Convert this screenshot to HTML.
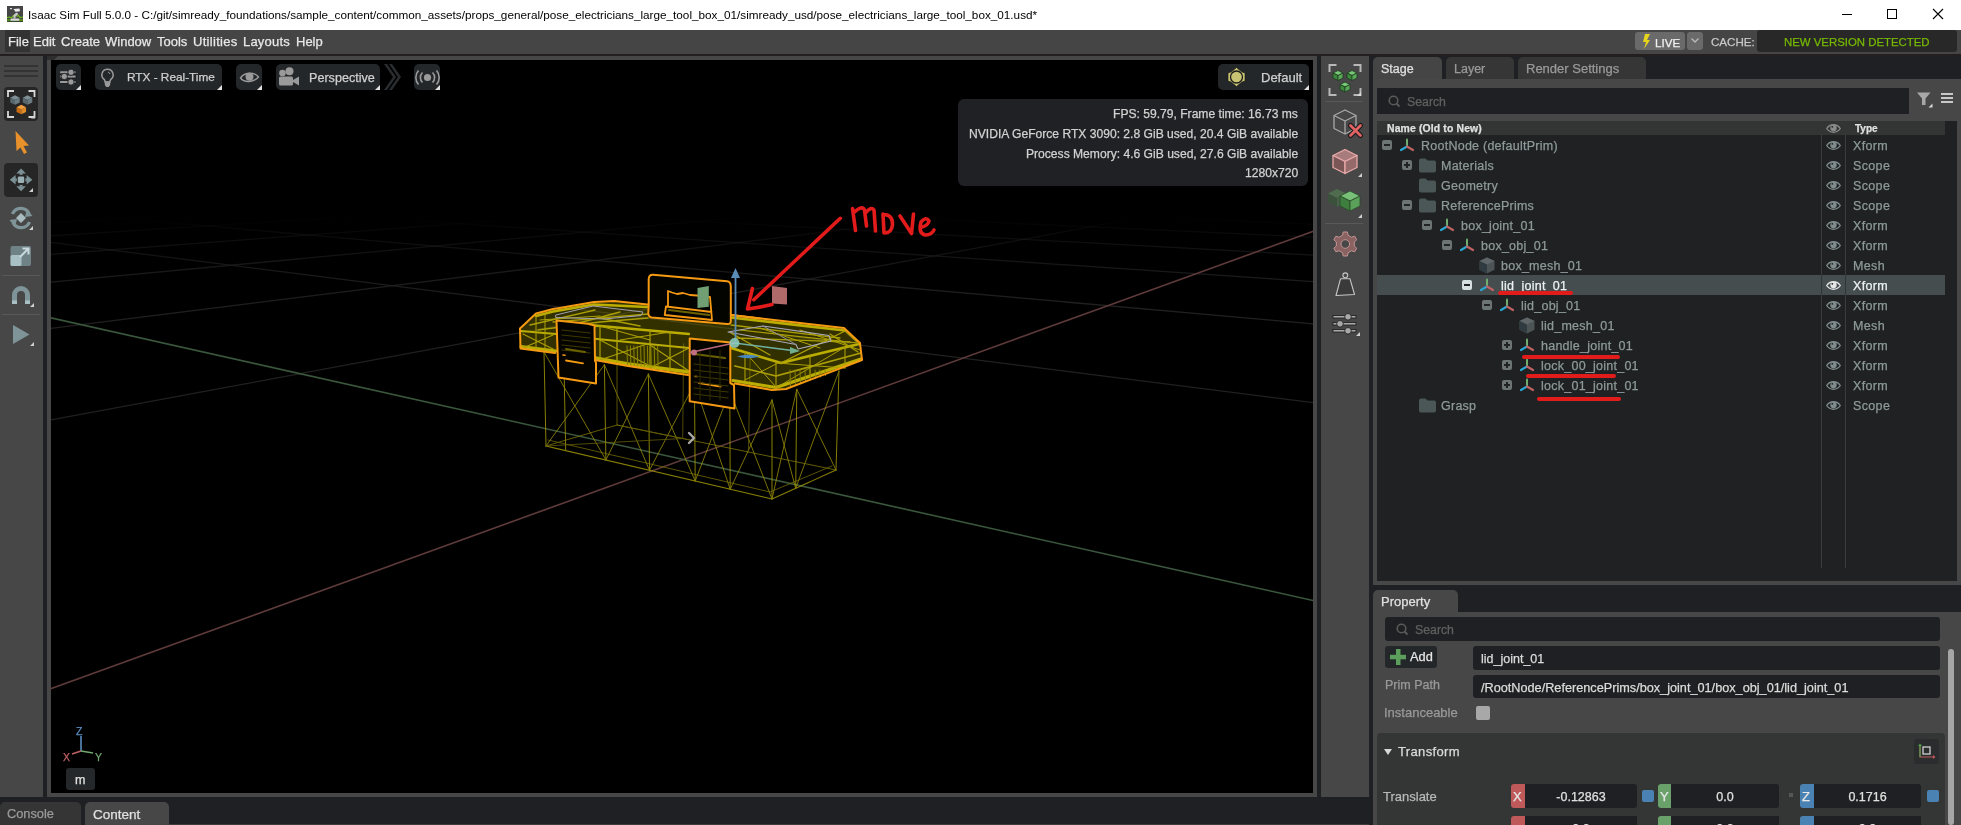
<!DOCTYPE html>
<html><head><meta charset="utf-8">
<style>
*{margin:0;padding:0;box-sizing:border-box}
html,body{width:1961px;height:825px;overflow:hidden;background:#1f2023;font-family:"Liberation Sans",sans-serif}
.a{position:absolute}
.t{position:absolute;white-space:nowrap;line-height:1;will-change:transform;-webkit-text-stroke:0.25px currentColor}
svg{overflow:visible}
</style></head><body>
<div class="a" style="left:0px;top:0px;width:1961px;height:30px;background:#ffffff;"></div>
<svg class="a" style="left:7px;top:6px;" width="16" height="16" viewBox="0 0 16 16"><rect x="0" y="0" width="16" height="16" fill="#454545"/><rect x="0" y="13" width="16" height="3" fill="#3a4a30"/><path d="M0 11.5L2.5 11L4.5 11.8L6.5 9.5L8 10.5M9.5 10.5L11.5 9.5L13 11.5L16 11" stroke="#6cc018" stroke-width="1.2" fill="none"/><path d="M0 14H16" stroke="#6cc018" stroke-width="1"/><rect x="3.5" y="12.5" width="9" height="2.2" rx="1" fill="#d8d8d8"/><path d="M6.5 12.5V9L9.5 6.5L11.5 8L8.5 10.5V12.5Z" fill="#c8c8c8"/><path d="M6.5 3L12.5 2.5L13 5.2L8.5 5.8Z" fill="#eeeeee"/><rect x="3" y="2" width="2" height="1.2" fill="#e0e0e0"/></svg>
<div class="t" style="left:28px;top:9.38px;font-size:11.74px;color:#000;font-weight:400;-webkit-text-stroke:0">Isaac Sim Full 5.0.0 - C:/git/simready_foundations/sample_content/common_assets/props_general/pose_electricians_large_tool_box_01/simready_usd/pose_electricians_large_tool_box_01.usd*</div>
<div class="a" style="left:1842px;top:14px;width:10px;height:1px;background:#000;"></div>
<div class="a" style="left:1887px;top:9px;width:10px;height:10px;border:1px solid #000"></div>
<svg class="a" style="left:1933px;top:9px;" width="10" height="10" viewBox="0 0 10 10"><path d="M0 0L10 10M10 0L0 10" stroke="#000" stroke-width="1.1"/></svg>
<div class="a" style="left:0px;top:30px;width:1961px;height:24px;background:#454545;"></div>
<div class="a" style="left:5px;top:30px;width:25px;height:22px;background:#333333;"></div>
<div class="t" style="left:7.5px;top:35.44px;font-size:13px;color:#e8e8e8;font-weight:400;letter-spacing:0px">File</div>
<div class="t" style="left:32.5px;top:35.44px;font-size:13px;color:#e8e8e8;font-weight:400;letter-spacing:0px">Edit</div>
<div class="t" style="left:60.6px;top:35.44px;font-size:13px;color:#e8e8e8;font-weight:400;letter-spacing:0px">Create</div>
<div class="t" style="left:104.9px;top:35.44px;font-size:13px;color:#e8e8e8;font-weight:400;letter-spacing:0px">Window</div>
<div class="t" style="left:157px;top:35.44px;font-size:13px;color:#e8e8e8;font-weight:400;letter-spacing:0px">Tools</div>
<div class="t" style="left:193px;top:35.44px;font-size:13px;color:#e8e8e8;font-weight:400;letter-spacing:0.3px">Utilities</div>
<div class="t" style="left:243.4px;top:35.44px;font-size:13px;color:#e8e8e8;font-weight:400;letter-spacing:0.2px">Layouts</div>
<div class="t" style="left:295.5px;top:35.44px;font-size:13px;color:#e8e8e8;font-weight:400;letter-spacing:0px">Help</div>
<div class="a" style="left:1635px;top:32px;width:50px;height:18px;background:#6a6a6a;border-radius:3px"></div>
<svg class="a" style="left:1642px;top:34px;" width="9" height="15" viewBox="0 0 9 15"><path d="M3 0h5L5 6h3L2 15l2-7H1z" fill="#e8d41c"/></svg>
<div class="t" style="left:1654.8px;top:36.50px;font-size:11.6px;color:#f0f0f0;font-weight:400;">LIVE</div>
<div class="a" style="left:1687px;top:32px;width:16px;height:18px;background:#6a6a6a;border-radius:3px"></div>
<svg class="a" style="left:1691px;top:38px;" width="8" height="5" viewBox="0 0 8 5"><path d="M0.5 0.5L4 4L7.5 0.5" stroke="#bbb" stroke-width="1.3" fill="none"/></svg>
<div class="t" style="left:1711px;top:36.10px;font-size:11.6px;color:#c8c8c8;font-weight:400;">CACHE:</div>
<div class="a" style="left:1757px;top:30px;width:200px;height:22px;background:#282828;border-radius:3px"></div>
<div class="t" style="left:1784px;top:36.88px;font-size:11.4px;color:#76b900;font-weight:400;">NEW VERSION DETECTED</div>
<div class="a" style="left:0px;top:54px;width:1961px;height:2px;background:#221f1e;"></div>
<div class="a" style="left:0px;top:56px;width:43px;height:741px;background:#474747;"></div>
<div class="a" style="left:4px;top:65px;width:34px;height:2px;background:#333333;"></div>
<div class="a" style="left:4px;top:70px;width:34px;height:2px;background:#333333;"></div>
<div class="a" style="left:4px;top:75px;width:34px;height:2px;background:#333333;"></div>
<div class="a" style="left:4px;top:87px;width:34px;height:34px;background:#262626;border-radius:4px"></div>
<div class="a" style="left:4px;top:163px;width:34px;height:34px;background:#262626;border-radius:4px"></div>
<div class="a" style="left:2px;top:275px;width:38px;height:1px;background:#595959;"></div>
<div class="a" style="left:2px;top:314px;width:38px;height:1px;background:#595959;"></div>
<svg class="a" style="left:0;top:0" width="50" height="400" viewBox="0 0 50 400"><path d="M8 97V91H14M28.5 91H34.5V97M8 111V117H14M28.5 117H34.5V111" stroke="#d8d8d8" stroke-width="1.8" fill="none"/><path d="M15 95.25 L19.75 97.625 L15 100 L10.25 97.625 Z" fill="#7d8e94"/><path d="M10.25 97.625 L15 100 L15 104.75 L10.25 102.375 Z" fill="#56686e"/><path d="M19.75 97.625 L15 100 L15 104.75 L19.75 102.375 Z" fill="#6a7c82"/><path d="M27.5 95.25 L32.25 97.625 L27.5 100 L22.75 97.625 Z" fill="#7d8e94"/><path d="M22.75 97.625 L27.5 100 L27.5 104.75 L22.75 102.375 Z" fill="#56686e"/><path d="M32.25 97.625 L27.5 100 L27.5 104.75 L32.25 102.375 Z" fill="#6a7c82"/><path d="M21.3 104.75 L26.05 107.125 L21.3 109.5 L16.55 107.125 Z" fill="#f0a040"/><path d="M16.55 107.125 L21.3 109.5 L21.3 114.25 L16.55 111.875 Z" fill="#c86a10"/><path d="M26.05 107.125 L21.3 109.5 L21.3 114.25 L26.05 111.875 Z" fill="#e08a28"/><path d="M35 114.5V118.5H31z" fill="#d0d0d0"/><path d="M15.5 131L29 145.5L23.5 146L27 152.5L24 154L20.5 147.5L16.5 151Z" fill="#e8912a"/><g fill="#7b9195"><path d="M21.1 168.5L25.9 173.4H16.3Z"/><rect x="19.6" y="173" width="3" height="1.8"/><path d="M21.1 191.2L25.9 186.3H16.3Z"/><rect x="19.6" y="184.9" width="3" height="1.8"/><path d="M9.8 179.8L15.6 175V184.6Z"/><rect x="15.2" y="178.3" width="1.6" height="3"/><path d="M32.4 179.8L26.6 175V184.6Z"/><rect x="25.4" y="178.3" width="1.6" height="3"/></g><rect x="17.8" y="176.5" width="6.4" height="6.6" rx="1.3" fill="#9ab0b4"/><path d="M33 188V192H29z" fill="#d0d0d0"/><g fill="none" stroke="#7f9498" stroke-width="3.2"><path d="M12.5 214A9 9 0 0 1 29 213.5"/><path d="M29.5 222A9 9 0 0 1 13 222.5"/></g><path d="M27 209L32.5 216L25 217Z" fill="#7f9498"/><path d="M15 227L9.5 220L17 219Z" fill="#7f9498"/><path d="M21 213L26 218L21 223L16 218Z" fill="#a8bcc0"/><path d="M33 226V230H29z" fill="#d0d0d0"/><rect x="10.5" y="246" width="20.5" height="20" rx="2" fill="#6f8286"/><rect x="10.5" y="255" width="11" height="11" rx="1.5" fill="#a8c0c4"/><path d="M20 257L28.5 248.5M22.5 248.5H28.5V254.5" stroke="#c8d8dc" stroke-width="2" fill="none"/><path d="M12 304V295A9 9 0 0 1 30 295V304H25V295A4 4 0 0 0 17 295V304Z" fill="#7f9498"/><rect x="12" y="300.5" width="5" height="3.5" fill="#a8c0c4"/><rect x="25" y="300.5" width="5" height="3.5" fill="#a8c0c4"/><path d="M34 303V307H30z" fill="#d0d0d0"/><path d="M13 325L29.5 334.5L13 344Z" fill="#7f9498"/><path d="M34 342V346H30z" fill="#d0d0d0"/></svg>
<div class="a" style="left:47px;top:56px;width:1270px;height:741px;background:#474747;"></div>
<div class="a" style="left:51px;top:60px;width:1262px;height:733px;background:#000000;"></div>
<svg class="a" style="left:51px;top:60px;overflow:hidden" width="1262" height="733" viewBox="51 60 1262 733"><defs>
<linearGradient id="g0" gradientUnits="userSpaceOnUse" x1="-570.6" y1="535.3" x2="1217.3" y2="203.3"><stop offset="0.0000" stop-color="#202020" stop-opacity="1.000"/><stop offset="0.4747" stop-color="#202020" stop-opacity="1.000"/><stop offset="0.6783" stop-color="#202020" stop-opacity="1.000"/><stop offset="0.7915" stop-color="#202020" stop-opacity="0.799"/><stop offset="0.8635" stop-color="#202020" stop-opacity="0.542"/><stop offset="0.9134" stop-color="#202020" stop-opacity="0.286"/><stop offset="0.9499" stop-color="#202020" stop-opacity="0.030"/><stop offset="0.9779" stop-color="#202020" stop-opacity="0.000"/><stop offset="1.0000" stop-color="#202020" stop-opacity="0.000"/></linearGradient>
<linearGradient id="g1" gradientUnits="userSpaceOnUse" x1="1691.3" y1="450.7" x2="-170.1" y2="214.2"><stop offset="0.0000" stop-color="#202020" stop-opacity="1.000"/><stop offset="0.3819" stop-color="#202020" stop-opacity="1.000"/><stop offset="0.5904" stop-color="#202020" stop-opacity="1.000"/><stop offset="0.7218" stop-color="#202020" stop-opacity="0.857"/><stop offset="0.8122" stop-color="#202020" stop-opacity="0.654"/><stop offset="0.8782" stop-color="#202020" stop-opacity="0.452"/><stop offset="0.9284" stop-color="#202020" stop-opacity="0.249"/><stop offset="0.9680" stop-color="#202020" stop-opacity="0.046"/><stop offset="1.0000" stop-color="#202020" stop-opacity="0.000"/></linearGradient>
<linearGradient id="g2" gradientUnits="userSpaceOnUse" x1="-620.6" y1="412.1" x2="1085.9" y2="199.3"><stop offset="0.0000" stop-color="#202020" stop-opacity="1.000"/><stop offset="0.3993" stop-color="#202020" stop-opacity="1.000"/><stop offset="0.6080" stop-color="#202020" stop-opacity="0.879"/><stop offset="0.7363" stop-color="#202020" stop-opacity="0.622"/><stop offset="0.8231" stop-color="#202020" stop-opacity="0.366"/><stop offset="0.8858" stop-color="#202020" stop-opacity="0.110"/><stop offset="0.9332" stop-color="#202020" stop-opacity="0.000"/><stop offset="0.9702" stop-color="#202020" stop-opacity="0.000"/><stop offset="1.0000" stop-color="#202020" stop-opacity="0.000"/></linearGradient>
<linearGradient id="g3" gradientUnits="userSpaceOnUse" x1="1647.9" y1="353.5" x2="-5.3" y2="207.2"><stop offset="0.0000" stop-color="#202020" stop-opacity="1.000"/><stop offset="0.3192" stop-color="#202020" stop-opacity="1.000"/><stop offset="0.5224" stop-color="#202020" stop-opacity="0.837"/><stop offset="0.6632" stop-color="#202020" stop-opacity="0.634"/><stop offset="0.7664" stop-color="#202020" stop-opacity="0.431"/><stop offset="0.8454" stop-color="#202020" stop-opacity="0.229"/><stop offset="0.9078" stop-color="#202020" stop-opacity="0.026"/><stop offset="0.9583" stop-color="#202020" stop-opacity="0.000"/><stop offset="1.0000" stop-color="#202020" stop-opacity="0.000"/></linearGradient>
<linearGradient id="g4" gradientUnits="userSpaceOnUse" x1="-646.8" y1="347.8" x2="971.2" y2="195.7"><stop offset="0.0000" stop-color="#202020" stop-opacity="1.000"/><stop offset="0.3507" stop-color="#202020" stop-opacity="0.959"/><stop offset="0.5576" stop-color="#202020" stop-opacity="0.702"/><stop offset="0.6940" stop-color="#202020" stop-opacity="0.446"/><stop offset="0.7908" stop-color="#202020" stop-opacity="0.190"/><stop offset="0.8630" stop-color="#202020" stop-opacity="0.000"/><stop offset="0.9190" stop-color="#202020" stop-opacity="0.000"/><stop offset="0.9636" stop-color="#202020" stop-opacity="0.000"/><stop offset="1.0000" stop-color="#202020" stop-opacity="0.000"/></linearGradient>
<linearGradient id="g5" gradientUnits="userSpaceOnUse" x1="1625.3" y1="302.8" x2="130.6" y2="201.4"><stop offset="0.0000" stop-color="#202020" stop-opacity="1.000"/><stop offset="0.2811" stop-color="#202020" stop-opacity="0.816"/><stop offset="0.4771" stop-color="#202020" stop-opacity="0.614"/><stop offset="0.6215" stop-color="#202020" stop-opacity="0.411"/><stop offset="0.7324" stop-color="#202020" stop-opacity="0.209"/><stop offset="0.8202" stop-color="#202020" stop-opacity="0.006"/><stop offset="0.8914" stop-color="#202020" stop-opacity="0.000"/><stop offset="0.9504" stop-color="#202020" stop-opacity="0.000"/><stop offset="1.0000" stop-color="#202020" stop-opacity="0.000"/></linearGradient>
<linearGradient id="g6" gradientUnits="userSpaceOnUse" x1="-662.8" y1="308.3" x2="870.0" y2="192.6"><stop offset="0.0000" stop-color="#202020" stop-opacity="1.000"/><stop offset="0.3167" stop-color="#202020" stop-opacity="0.783"/><stop offset="0.5196" stop-color="#202020" stop-opacity="0.526"/><stop offset="0.6606" stop-color="#202020" stop-opacity="0.270"/><stop offset="0.7644" stop-color="#202020" stop-opacity="0.014"/><stop offset="0.8439" stop-color="#202020" stop-opacity="0.000"/><stop offset="0.9068" stop-color="#202020" stop-opacity="0.000"/><stop offset="0.9578" stop-color="#202020" stop-opacity="0.000"/><stop offset="1.0000" stop-color="#202020" stop-opacity="0.000"/></linearGradient>
<linearGradient id="g7" gradientUnits="userSpaceOnUse" x1="1611.3" y1="271.6" x2="244.8" y2="196.5"><stop offset="0.0000" stop-color="#202020" stop-opacity="0.796"/><stop offset="0.2555" stop-color="#202020" stop-opacity="0.594"/><stop offset="0.4446" stop-color="#202020" stop-opacity="0.391"/><stop offset="0.5904" stop-color="#202020" stop-opacity="0.188"/><stop offset="0.7061" stop-color="#202020" stop-opacity="0.000"/><stop offset="0.8001" stop-color="#202020" stop-opacity="0.000"/><stop offset="0.8781" stop-color="#202020" stop-opacity="0.000"/><stop offset="0.9439" stop-color="#202020" stop-opacity="0.000"/><stop offset="1.0000" stop-color="#202020" stop-opacity="0.000"/></linearGradient>
<linearGradient id="g8" gradientUnits="userSpaceOnUse" x1="-673.7" y1="281.6" x2="780.2" y2="189.8"><stop offset="0.0000" stop-color="#202020" stop-opacity="0.863"/><stop offset="0.2916" stop-color="#202020" stop-opacity="0.606"/><stop offset="0.4899" stop-color="#202020" stop-opacity="0.350"/><stop offset="0.6336" stop-color="#202020" stop-opacity="0.094"/><stop offset="0.7424" stop-color="#202020" stop-opacity="0.000"/><stop offset="0.8277" stop-color="#202020" stop-opacity="0.000"/><stop offset="0.8963" stop-color="#202020" stop-opacity="0.000"/><stop offset="0.9528" stop-color="#202020" stop-opacity="0.000"/><stop offset="1.0000" stop-color="#202020" stop-opacity="0.000"/></linearGradient>
<linearGradient id="g9" gradientUnits="userSpaceOnUse" x1="1601.9" y1="250.5" x2="341.9" y2="192.4"><stop offset="0.0000" stop-color="#202020" stop-opacity="0.573"/><stop offset="0.2371" stop-color="#202020" stop-opacity="0.371"/><stop offset="0.4203" stop-color="#202020" stop-opacity="0.168"/><stop offset="0.5662" stop-color="#202020" stop-opacity="0.000"/><stop offset="0.6851" stop-color="#202020" stop-opacity="0.000"/><stop offset="0.7838" stop-color="#202020" stop-opacity="0.000"/><stop offset="0.8671" stop-color="#202020" stop-opacity="0.000"/><stop offset="0.9384" stop-color="#202020" stop-opacity="0.000"/><stop offset="1.0000" stop-color="#202020" stop-opacity="0.000"/></linearGradient>
<linearGradient id="g10" gradientUnits="userSpaceOnUse" x1="-681.5" y1="262.3" x2="700.0" y2="187.3"><stop offset="0.0000" stop-color="#202020" stop-opacity="0.686"/><stop offset="0.2723" stop-color="#202020" stop-opacity="0.430"/><stop offset="0.4662" stop-color="#202020" stop-opacity="0.174"/><stop offset="0.6112" stop-color="#202020" stop-opacity="0.000"/><stop offset="0.7237" stop-color="#202020" stop-opacity="0.000"/><stop offset="0.8136" stop-color="#202020" stop-opacity="0.000"/><stop offset="0.8871" stop-color="#202020" stop-opacity="0.000"/><stop offset="0.9483" stop-color="#202020" stop-opacity="0.000"/><stop offset="1.0000" stop-color="#202020" stop-opacity="0.000"/></linearGradient>
<linearGradient id="g11" gradientUnits="userSpaceOnUse" x1="1595.1" y1="235.3" x2="425.7" y2="188.9"><stop offset="0.0000" stop-color="#202020" stop-opacity="0.350"/><stop offset="0.2232" stop-color="#202020" stop-opacity="0.148"/><stop offset="0.4014" stop-color="#202020" stop-opacity="0.000"/><stop offset="0.5469" stop-color="#202020" stop-opacity="0.000"/><stop offset="0.6680" stop-color="#202020" stop-opacity="0.000"/><stop offset="0.7703" stop-color="#202020" stop-opacity="0.000"/><stop offset="0.8579" stop-color="#202020" stop-opacity="0.000"/><stop offset="0.9337" stop-color="#202020" stop-opacity="0.000"/><stop offset="1.0000" stop-color="#202020" stop-opacity="0.000"/></linearGradient>
<linearGradient id="g12" gradientUnits="userSpaceOnUse" x1="-687.4" y1="247.7" x2="627.9" y2="185.1"><stop offset="0.0000" stop-color="#202020" stop-opacity="0.510"/><stop offset="0.2570" stop-color="#202020" stop-opacity="0.254"/><stop offset="0.4467" stop-color="#202020" stop-opacity="0.000"/><stop offset="0.5923" stop-color="#202020" stop-opacity="0.000"/><stop offset="0.7078" stop-color="#202020" stop-opacity="0.000"/><stop offset="0.8014" stop-color="#202020" stop-opacity="0.000"/><stop offset="0.8790" stop-color="#202020" stop-opacity="0.000"/><stop offset="0.9443" stop-color="#202020" stop-opacity="0.000"/><stop offset="1.0000" stop-color="#202020" stop-opacity="0.000"/></linearGradient>
<linearGradient id="g13" gradientUnits="userSpaceOnUse" x1="1590.0" y1="223.8" x2="498.6" y2="185.8"><stop offset="0.0000" stop-color="#202020" stop-opacity="0.128"/><stop offset="0.2124" stop-color="#202020" stop-opacity="0.000"/><stop offset="0.3863" stop-color="#202020" stop-opacity="0.000"/><stop offset="0.5312" stop-color="#202020" stop-opacity="0.000"/><stop offset="0.6538" stop-color="#202020" stop-opacity="0.000"/><stop offset="0.7589" stop-color="#202020" stop-opacity="0.000"/><stop offset="0.8500" stop-color="#202020" stop-opacity="0.000"/><stop offset="0.9297" stop-color="#202020" stop-opacity="0.000"/><stop offset="1.0000" stop-color="#202020" stop-opacity="0.000"/></linearGradient>
</defs>
<line x1="-570.6" y1="535.3" x2="1217.3" y2="203.3" stroke="url(#g0)" stroke-width="1.3"/>
<line x1="1691.3" y1="450.7" x2="-170.1" y2="214.2" stroke="url(#g1)" stroke-width="1.3"/>
<line x1="-620.6" y1="412.1" x2="1085.9" y2="199.3" stroke="url(#g2)" stroke-width="1.3"/>
<line x1="1647.9" y1="353.5" x2="-5.3" y2="207.2" stroke="url(#g3)" stroke-width="1.3"/>
<line x1="-646.8" y1="347.8" x2="971.2" y2="195.7" stroke="url(#g4)" stroke-width="1.3"/>
<line x1="1625.3" y1="302.8" x2="130.6" y2="201.4" stroke="url(#g5)" stroke-width="1.3"/>
<line x1="-662.8" y1="308.3" x2="870.0" y2="192.6" stroke="url(#g6)" stroke-width="1.3"/>
<line x1="1611.3" y1="271.6" x2="244.8" y2="196.5" stroke="url(#g7)" stroke-width="1.3"/>
<line x1="-673.7" y1="281.6" x2="780.2" y2="189.8" stroke="url(#g8)" stroke-width="1.3"/>
<line x1="1601.9" y1="250.5" x2="341.9" y2="192.4" stroke="url(#g9)" stroke-width="1.3"/>
<line x1="-681.5" y1="262.3" x2="700.0" y2="187.3" stroke="url(#g10)" stroke-width="1.3"/>
<line x1="1595.1" y1="235.3" x2="425.7" y2="188.9" stroke="url(#g11)" stroke-width="1.3"/>
<line x1="-687.4" y1="247.7" x2="627.9" y2="185.1" stroke="url(#g12)" stroke-width="1.3"/>
<line x1="1590.0" y1="223.8" x2="498.6" y2="185.8" stroke="url(#g13)" stroke-width="1.3"/>
<line x1="40" y1="692.7" x2="1320" y2="228.8" stroke="#5e3a3a" stroke-width="1.6"/>
<line x1="1807.8" y1="711.3" x2="-404.1" y2="216.0" stroke="#3a563c" stroke-width="1.6"/><g opacity="0.8"><path d="M546.0 446.0 L772.0 499.0 L836.0 470.0" stroke="#ab9f06" stroke-width="1.1" fill="none" stroke-linejoin="round" stroke-linecap="round" /><path d="M546.0 446.0 L617.0 425.0 L836.0 470.0" stroke="#7d7406" stroke-width="1.0" fill="none" stroke-linejoin="round" stroke-linecap="round" /><path d="M548.0 440.0 L770.0 492.0 L832.0 466.0" stroke="#7d7406" stroke-width="0.9" fill="none" stroke-linejoin="round" stroke-linecap="round" /><path d="M546.0 446.0 L544.0 352.0" stroke="#ab9f06" stroke-width="1.0" fill="none" stroke-linejoin="round" stroke-linecap="round" /><path d="M565.7 450.6 L563.8 356.2" stroke="#ab9f06" stroke-width="1.0" fill="none" stroke-linejoin="round" stroke-linecap="round" /><path d="M605.9 460.0 L604.4 364.7" stroke="#ab9f06" stroke-width="1.0" fill="none" stroke-linejoin="round" stroke-linecap="round" /><path d="M649.5 470.3 L648.4 374.0" stroke="#ab9f06" stroke-width="1.0" fill="none" stroke-linejoin="round" stroke-linecap="round" /><path d="M695.2 481.0 L694.5 383.7" stroke="#ab9f06" stroke-width="1.0" fill="none" stroke-linejoin="round" stroke-linecap="round" /><path d="M730.2 489.2 L729.8 391.1" stroke="#ab9f06" stroke-width="1.0" fill="none" stroke-linejoin="round" stroke-linecap="round" /><path d="M772.0 499.0 L772.0 400.0" stroke="#ab9f06" stroke-width="1.0" fill="none" stroke-linejoin="round" stroke-linecap="round" /><path d="M546.0 446.0 L604.4 364.7" stroke="#ab9f06" stroke-width="0.9" fill="none" stroke-linejoin="round" stroke-linecap="round" /><path d="M544.0 352.0 L605.9 460.0" stroke="#ab9f06" stroke-width="0.9" fill="none" stroke-linejoin="round" stroke-linecap="round" /><path d="M605.9 460.0 L648.4 374.0" stroke="#ab9f06" stroke-width="0.9" fill="none" stroke-linejoin="round" stroke-linecap="round" /><path d="M604.4 364.7 L649.5 470.3" stroke="#ab9f06" stroke-width="0.9" fill="none" stroke-linejoin="round" stroke-linecap="round" /><path d="M649.5 470.3 L694.5 383.7" stroke="#ab9f06" stroke-width="0.9" fill="none" stroke-linejoin="round" stroke-linecap="round" /><path d="M648.4 374.0 L695.2 481.0" stroke="#ab9f06" stroke-width="0.9" fill="none" stroke-linejoin="round" stroke-linecap="round" /><path d="M695.2 481.0 L729.8 391.1" stroke="#ab9f06" stroke-width="0.9" fill="none" stroke-linejoin="round" stroke-linecap="round" /><path d="M694.5 383.7 L730.2 489.2" stroke="#ab9f06" stroke-width="0.9" fill="none" stroke-linejoin="round" stroke-linecap="round" /><path d="M730.2 489.2 L772.0 400.0" stroke="#ab9f06" stroke-width="0.9" fill="none" stroke-linejoin="round" stroke-linecap="round" /><path d="M729.8 391.1 L772.0 499.0" stroke="#ab9f06" stroke-width="0.9" fill="none" stroke-linejoin="round" stroke-linecap="round" /><path d="M795.7 488.3 L796.8 389.3" stroke="#ab9f06" stroke-width="1.0" fill="none" stroke-linejoin="round" stroke-linecap="round" /><path d="M836.0 470.0 L839.0 371.0" stroke="#ab9f06" stroke-width="1.0" fill="none" stroke-linejoin="round" stroke-linecap="round" /><path d="M772.0 499.0 L796.8 389.3" stroke="#ab9f06" stroke-width="0.9" fill="none" stroke-linejoin="round" stroke-linecap="round" /><path d="M772.0 400.0 L795.7 488.3" stroke="#ab9f06" stroke-width="0.9" fill="none" stroke-linejoin="round" stroke-linecap="round" /><path d="M795.7 488.3 L839.0 371.0" stroke="#ab9f06" stroke-width="0.9" fill="none" stroke-linejoin="round" stroke-linecap="round" /><path d="M796.8 389.3 L836.0 470.0" stroke="#ab9f06" stroke-width="0.9" fill="none" stroke-linejoin="round" stroke-linecap="round" /><path d="M617.0 425.0 L617.0 332.0" stroke="#7d7406" stroke-width="0.9" fill="none" stroke-linejoin="round" stroke-linecap="round" /><path d="M682.7 438.5 L683.6 343.7" stroke="#7d7406" stroke-width="0.8" fill="none" stroke-linejoin="round" stroke-linecap="round" /><path d="M748.4 452.0 L750.2 355.4" stroke="#7d7406" stroke-width="0.8" fill="none" stroke-linejoin="round" stroke-linecap="round" /><path d="M546.0 446.0 L682.7 438.5" stroke="#7d7406" stroke-width="0.8" fill="none" stroke-linejoin="round" stroke-linecap="round" /><path d="M617.0 425.0 L690.0 440.0" stroke="#7d7406" stroke-width="0.8" fill="none" stroke-linejoin="round" stroke-linecap="round" /></g>
<path d="M520.0 329.0 L536.0 314.0 L553.0 309.0 L594.0 302.0 L614.0 301.0 L647.0 304.5 L731.0 315.0 L844.0 328.0 L860.0 343.0 L862.0 360.0 L786.0 389.0 L772.0 390.0 L735.0 383.0 L690.0 375.0 L628.0 366.0 L590.0 359.0 L555.0 353.0 L521.0 349.0 Z" stroke="none" stroke-width="0" fill="rgba(150,140,0,0.34)" stroke-linejoin="round" stroke-linecap="round" />
<g><path d="M536.0 316.0 L553.0 311.5 L594.0 304.5 L647.0 307.0" stroke="#bcae00" stroke-width="2.6" fill="none" stroke-linejoin="round" stroke-linecap="round" /><path d="M521.0 331.0 L556.0 334.0" stroke="#bcae00" stroke-width="2.2" fill="none" stroke-linejoin="round" stroke-linecap="round" /><path d="M521.0 346.5 L556.0 351.0" stroke="#bcae00" stroke-width="3.0" fill="none" stroke-linejoin="round" stroke-linecap="round" /><path d="M523.0 334.0 L553.0 349.0" stroke="#ab9f06" stroke-width="1.2" fill="none" stroke-linejoin="round" stroke-linecap="round" /><path d="M523.0 348.0 L553.0 335.0" stroke="#ab9f06" stroke-width="1.2" fill="none" stroke-linejoin="round" stroke-linecap="round" /><path d="M536.0 316.0 L536.0 349.0" stroke="#ab9f06" stroke-width="1.0" fill="none" stroke-linejoin="round" stroke-linecap="round" /><path d="M545.0 315.0 L545.0 350.0" stroke="#ab9f06" stroke-width="1.0" fill="none" stroke-linejoin="round" stroke-linecap="round" /><path d="M538.0 330.0 L600.0 322.0 L648.0 318.0" stroke="#ab9f06" stroke-width="1.4" fill="none" stroke-linejoin="round" stroke-linecap="round" /><path d="M556.0 334.0 L600.0 326.0" stroke="#ab9f06" stroke-width="1.2" fill="none" stroke-linejoin="round" stroke-linecap="round" /><path d="M540.0 320.0 L600.0 316.0" stroke="#ab9f06" stroke-width="1.0" fill="none" stroke-linejoin="round" stroke-linecap="round" /><path d="M589.0 325.0 L689.0 334.0" stroke="#bcae00" stroke-width="2.4" fill="none" stroke-linejoin="round" stroke-linecap="round" /><path d="M592.0 338.5 L689.0 348.0" stroke="#bcae00" stroke-width="2.0" fill="none" stroke-linejoin="round" stroke-linecap="round" /><path d="M590.0 357.0 L628.0 364.0 L689.0 372.0" stroke="#bcae00" stroke-width="3.6" fill="none" stroke-linejoin="round" stroke-linecap="round" /><path d="M600.0 326.0 L600.0 358.0" stroke="#ab9f06" stroke-width="1.2" fill="none" stroke-linejoin="round" stroke-linecap="round" /><path d="M617.0 327.0 L617.0 362.0" stroke="#ab9f06" stroke-width="1.2" fill="none" stroke-linejoin="round" stroke-linecap="round" /><path d="M650.0 330.0 L650.0 368.0" stroke="#ab9f06" stroke-width="1.2" fill="none" stroke-linejoin="round" stroke-linecap="round" /><path d="M670.0 332.0 L670.0 370.0" stroke="#ab9f06" stroke-width="1.2" fill="none" stroke-linejoin="round" stroke-linecap="round" /><path d="M600.0 340.0 L650.0 366.0" stroke="#ab9f06" stroke-width="1.1" fill="none" stroke-linejoin="round" stroke-linecap="round" /><path d="M600.0 360.0 L650.0 343.0" stroke="#ab9f06" stroke-width="1.1" fill="none" stroke-linejoin="round" stroke-linecap="round" /><path d="M650.0 345.0 L689.0 371.0" stroke="#ab9f06" stroke-width="1.1" fill="none" stroke-linejoin="round" stroke-linecap="round" /><path d="M650.0 368.0 L689.0 348.0" stroke="#ab9f06" stroke-width="1.1" fill="none" stroke-linejoin="round" stroke-linecap="round" /><path d="M600.0 326.0 L650.0 340.0" stroke="#ab9f06" stroke-width="1.1" fill="none" stroke-linejoin="round" stroke-linecap="round" /><path d="M620.0 340.0 L670.0 332.0" stroke="#ab9f06" stroke-width="1.1" fill="none" stroke-linejoin="round" stroke-linecap="round" /><path d="M627.0 346.0 L627.5 366.0" stroke="#8c8400" stroke-width="1.0" fill="none" stroke-linejoin="round" stroke-linecap="round" /><path d="M630.4 346.0 L630.9 366.0" stroke="#8c8400" stroke-width="1.0" fill="none" stroke-linejoin="round" stroke-linecap="round" /><path d="M633.8 346.0 L634.3 366.0" stroke="#8c8400" stroke-width="1.0" fill="none" stroke-linejoin="round" stroke-linecap="round" /><path d="M637.2 346.0 L637.7 366.0" stroke="#8c8400" stroke-width="1.0" fill="none" stroke-linejoin="round" stroke-linecap="round" /><path d="M640.6 346.0 L641.1 366.0" stroke="#8c8400" stroke-width="1.0" fill="none" stroke-linejoin="round" stroke-linecap="round" /><path d="M644.0 346.0 L644.5 366.0" stroke="#8c8400" stroke-width="1.0" fill="none" stroke-linejoin="round" stroke-linecap="round" /><path d="M647.4 346.0 L647.9 366.0" stroke="#8c8400" stroke-width="1.0" fill="none" stroke-linejoin="round" stroke-linecap="round" /><path d="M650.8 346.0 L651.3 366.0" stroke="#8c8400" stroke-width="1.0" fill="none" stroke-linejoin="round" stroke-linecap="round" /><path d="M654.2 346.0 L654.7 366.0" stroke="#8c8400" stroke-width="1.0" fill="none" stroke-linejoin="round" stroke-linecap="round" /><path d="M657.6 346.0 L658.1 366.0" stroke="#8c8400" stroke-width="1.0" fill="none" stroke-linejoin="round" stroke-linecap="round" /><path d="M553.0 322.0 L648.0 314.0" stroke="#ab9f06" stroke-width="1.3" fill="none" stroke-linejoin="round" stroke-linecap="round" /><path d="M530.0 325.0 L595.0 310.0" stroke="#ab9f06" stroke-width="1.3" fill="none" stroke-linejoin="round" stroke-linecap="round" /><path d="M560.0 328.0 L620.0 312.0" stroke="#ab9f06" stroke-width="1.3" fill="none" stroke-linejoin="round" stroke-linecap="round" /><path d="M600.0 318.0 L640.0 326.0" stroke="#ab9f06" stroke-width="1.3" fill="none" stroke-linejoin="round" stroke-linecap="round" /><path d="M731.0 317.5 L845.0 330.5" stroke="#bcae00" stroke-width="2.6" fill="none" stroke-linejoin="round" stroke-linecap="round" /><path d="M731.0 348.0 L781.0 363.0 L859.0 344.0" stroke="#bcae00" stroke-width="2.6" fill="none" stroke-linejoin="round" stroke-linecap="round" /><path d="M735.0 366.0 L776.0 376.0 L861.0 353.0" stroke="#ab9f06" stroke-width="1.8" fill="none" stroke-linejoin="round" stroke-linecap="round" /><path d="M733.0 380.5 L776.0 387.5 L861.0 359.0" stroke="#bcae00" stroke-width="3.2" fill="none" stroke-linejoin="round" stroke-linecap="round" /><path d="M845.0 331.0 L781.0 363.0" stroke="#ab9f06" stroke-width="1.3" fill="none" stroke-linejoin="round" stroke-linecap="round" /><path d="M857.0 342.0 L845.0 331.0" stroke="#ab9f06" stroke-width="1.3" fill="none" stroke-linejoin="round" stroke-linecap="round" /><path d="M740.0 330.0 L858.0 343.0" stroke="#ab9f06" stroke-width="1.2" fill="none" stroke-linejoin="round" stroke-linecap="round" /><path d="M745.0 352.0 L745.0 382.0" stroke="#ab9f06" stroke-width="1.1" fill="none" stroke-linejoin="round" stroke-linecap="round" /><path d="M776.0 363.0 L776.0 388.0" stroke="#ab9f06" stroke-width="1.1" fill="none" stroke-linejoin="round" stroke-linecap="round" /><path d="M810.0 355.0 L810.0 378.0" stroke="#ab9f06" stroke-width="1.1" fill="none" stroke-linejoin="round" stroke-linecap="round" /><path d="M845.0 347.0 L845.0 368.0" stroke="#ab9f06" stroke-width="1.1" fill="none" stroke-linejoin="round" stroke-linecap="round" /><path d="M745.0 352.0 L776.0 387.0" stroke="#ab9f06" stroke-width="1.0" fill="none" stroke-linejoin="round" stroke-linecap="round" /><path d="M745.0 380.0 L776.0 364.0" stroke="#ab9f06" stroke-width="1.0" fill="none" stroke-linejoin="round" stroke-linecap="round" /><path d="M776.0 363.0 L845.0 368.0" stroke="#ab9f06" stroke-width="1.0" fill="none" stroke-linejoin="round" stroke-linecap="round" /><path d="M776.0 388.0 L845.0 347.0" stroke="#ab9f06" stroke-width="1.0" fill="none" stroke-linejoin="round" stroke-linecap="round" /><path d="M800.0 330.0 L860.0 350.0" stroke="#ab9f06" stroke-width="1.0" fill="none" stroke-linejoin="round" stroke-linecap="round" /><path d="M760.0 328.0 L820.0 348.0" stroke="#ab9f06" stroke-width="1.0" fill="none" stroke-linejoin="round" stroke-linecap="round" /><path d="M731.0 325.0 L840.0 338.0" stroke="#ab9f06" stroke-width="1.3" fill="none" stroke-linejoin="round" stroke-linecap="round" /><path d="M735.0 338.0 L850.0 342.0" stroke="#ab9f06" stroke-width="1.3" fill="none" stroke-linejoin="round" stroke-linecap="round" /><path d="M731.0 333.0 L770.0 355.0" stroke="#ab9f06" stroke-width="1.3" fill="none" stroke-linejoin="round" stroke-linecap="round" /><path d="M830.0 334.0 L858.0 352.0" stroke="#ab9f06" stroke-width="1.3" fill="none" stroke-linejoin="round" stroke-linecap="round" /><path d="M790.0 370.0 L790.5 386.0" stroke="#8c8400" stroke-width="0.9" fill="none" stroke-linejoin="round" stroke-linecap="round" /><path d="M795.0 370.0 L795.5 384.5" stroke="#8c8400" stroke-width="0.9" fill="none" stroke-linejoin="round" stroke-linecap="round" /><path d="M800.0 370.0 L800.5 383.0" stroke="#8c8400" stroke-width="0.9" fill="none" stroke-linejoin="round" stroke-linecap="round" /><path d="M805.0 370.0 L805.5 381.5" stroke="#8c8400" stroke-width="0.9" fill="none" stroke-linejoin="round" stroke-linecap="round" /><path d="M810.0 370.0 L810.5 380.0" stroke="#8c8400" stroke-width="0.9" fill="none" stroke-linejoin="round" stroke-linecap="round" /><path d="M815.0 370.0 L815.5 378.5" stroke="#8c8400" stroke-width="0.9" fill="none" stroke-linejoin="round" stroke-linecap="round" /><path d="M820.0 370.0 L820.5 377.0" stroke="#8c8400" stroke-width="0.9" fill="none" stroke-linejoin="round" stroke-linecap="round" /><path d="M825.0 370.0 L825.5 375.5" stroke="#8c8400" stroke-width="0.9" fill="none" stroke-linejoin="round" stroke-linecap="round" /></g>
<path d="M556.0 315.0 L593.0 306.0 L643.0 312.0 L641.0 315.5 L605.0 319.0 L556.0 317.5 Z" stroke="#a0a0b0" stroke-width="1.0" fill="none" stroke-linejoin="round" stroke-linecap="round" />
<path d="M728.0 332.0 L763.0 326.0 L829.0 335.5 L831.0 341.0 L798.0 349.0 L796.0 344.5 Z" stroke="#a8a8b8" stroke-width="1.1" fill="none" stroke-linejoin="round" stroke-linecap="round" />
<path d="M763.0 326.0 L796.0 344.5" stroke="#9090a0" stroke-width="1.0" fill="none" stroke-linejoin="round" stroke-linecap="round" />
<path d="M556.5 320.5 L588.0 323.8 L594.5 325.5 L595.0 361.0 L596.0 362.5 L596.0 383.5 L558.5 377.5 Z" stroke="#f59a12" stroke-width="2.0" fill="#050400" stroke-linejoin="round" stroke-linecap="round" />
<path d="M566.0 360.5 L583.0 363.3" stroke="#f59a12" stroke-width="1.8" fill="none" stroke-linejoin="round" stroke-linecap="round" />
<path d="M563.0 355.0 L565.0 355.3" stroke="#f59a12" stroke-width="1.5" fill="none" stroke-linejoin="round" stroke-linecap="round" />
<path d="M562.0 330.0 L590.0 333.0" stroke="#3c3800" stroke-width="1.2" fill="none" stroke-linejoin="round" stroke-linecap="round" />
<path d="M562.0 335.0 L590.0 338.0" stroke="#3c3800" stroke-width="1.2" fill="none" stroke-linejoin="round" stroke-linecap="round" />
<path d="M562.0 340.0 L590.0 343.0" stroke="#3c3800" stroke-width="1.2" fill="none" stroke-linejoin="round" stroke-linecap="round" />
<path d="M562.0 345.0 L590.0 348.0" stroke="#3c3800" stroke-width="1.2" fill="none" stroke-linejoin="round" stroke-linecap="round" />
<path d="M562.0 350.0 L590.0 353.0" stroke="#3c3800" stroke-width="1.2" fill="none" stroke-linejoin="round" stroke-linecap="round" />
<path d="M566.0 349.0 L585.0 352.0" stroke="#6a6200" stroke-width="2.0" fill="none" stroke-linejoin="round" stroke-linecap="round" />
<path d="M689.7 338.5 L730.3 342.6 L730.3 383.0 L734.0 385.0 L734.5 408.5 L689.7 401.2 Z" stroke="#f59a12" stroke-width="2.0" fill="#050400" stroke-linejoin="round" stroke-linecap="round" />
<path d="M699.0 383.0 L720.6 386.7" stroke="#f59a12" stroke-width="1.8" fill="none" stroke-linejoin="round" stroke-linecap="round" />
<path d="M695.0 376.4 L697.0 376.6" stroke="#f59a12" stroke-width="1.5" fill="none" stroke-linejoin="round" stroke-linecap="round" />
<path d="M694.0 354.0 L725.0 358.0" stroke="#6a6200" stroke-width="2.2" fill="none" stroke-linejoin="round" stroke-linecap="round" />
<path d="M694.0 364.0 L728.0 368.0" stroke="#3c3800" stroke-width="1.2" fill="none" stroke-linejoin="round" stroke-linecap="round" />
<path d="M694.0 370.0 L728.0 374.0" stroke="#3c3800" stroke-width="1.2" fill="none" stroke-linejoin="round" stroke-linecap="round" />
<path d="M694.0 376.0 L728.0 380.0" stroke="#3c3800" stroke-width="1.2" fill="none" stroke-linejoin="round" stroke-linecap="round" />
<path d="M694.0 382.0 L728.0 386.0" stroke="#3c3800" stroke-width="1.2" fill="none" stroke-linejoin="round" stroke-linecap="round" />
<path d="M694.0 388.0 L728.0 392.0" stroke="#3c3800" stroke-width="1.2" fill="none" stroke-linejoin="round" stroke-linecap="round" />
<path d="M694.0 394.0 L728.0 398.0" stroke="#3c3800" stroke-width="1.2" fill="none" stroke-linejoin="round" stroke-linecap="round" />
<path d="M700.0 350.0 L700.0 400.0" stroke="#2e2a00" stroke-width="1.0" fill="none" stroke-linejoin="round" stroke-linecap="round" />
<path d="M710.0 350.0 L710.0 400.0" stroke="#2e2a00" stroke-width="1.0" fill="none" stroke-linejoin="round" stroke-linecap="round" />
<path d="M720.0 350.0 L720.0 400.0" stroke="#2e2a00" stroke-width="1.0" fill="none" stroke-linejoin="round" stroke-linecap="round" />
<path d="M647.5 304.5 L614.0 301.0 L594.0 302.0 L553.0 309.0 L536.0 313.5 L520.0 328.5 L520.5 348.5 L555.0 353.0" stroke="#f59a12" stroke-width="2.0" fill="none" stroke-linejoin="round" stroke-linecap="round" />
<path d="M595.0 360.0 L628.0 366.0 L688.0 375.0" stroke="#f59a12" stroke-width="2.0" fill="none" stroke-linejoin="round" stroke-linecap="round" />
<path d="M731.0 315.0 L844.0 328.0 L860.0 343.0 L862.0 360.0 L786.0 389.0 L772.0 390.0 L735.0 383.5" stroke="#f59a12" stroke-width="2.0" fill="none" stroke-linejoin="round" stroke-linecap="round" />
<path d="M648.7 278.0 L652.0 274.6 L727.0 281.0 L730.5 285.0 L731.0 324.0 L648.2 317.0 Z" stroke="none" stroke-width="0" fill="#030300" stroke-linejoin="round" stroke-linecap="round" />
<path d="M648.7 305.5V279Q649 274.6 653 274.8L727 281.2Q730.6 281.6 730.8 286V321Q730.8 324.5 727 324L652 317.5Q648.3 317 648.3 313Z" stroke="#f59a12" stroke-width="2" fill="none"/>
<path d="M668.0 306.5 L668.0 291.0 L672.0 292.5 L677.0 294.0 L683.0 293.0 L690.0 295.0 L697.0 295.5 L704.0 296.5 L710.0 297.0 L712.0 320.0 L664.7 315.0 L666.0 306.5 L711.5 312.0" stroke="#f59a12" stroke-width="1.8" fill="none" stroke-linejoin="round" stroke-linecap="round" />
<path d="M669.0 310.0 L709.0 315.0" stroke="#6a6200" stroke-width="2.2" fill="none" stroke-linejoin="round" stroke-linecap="round" />
<path d="M731.0 315.0 L760.0 318.5" stroke="#f59a12" stroke-width="2.0" fill="none" stroke-linejoin="round" stroke-linecap="round" /><path d="M734.5 343.0 L690.0 352.5" stroke="#b8687a" stroke-width="1.6" fill="none" stroke-linejoin="round" stroke-linecap="round" />
<circle cx="694" cy="352.5" r="3" fill="#c07080"/>
<path d="M734.5 343.0 L792.0 350.5" stroke="#70b0a0" stroke-width="1.6" fill="none" stroke-linejoin="round" stroke-linecap="round" />
<path d="M790 347L800 351L790 354Z" fill="#70b090"/>
<path d="M735.5 340.0 L735.5 276.0" stroke="#5a8cb8" stroke-width="1.8" fill="none" stroke-linejoin="round" stroke-linecap="round" />
<path d="M731 278L735.5 268L740 278Z" fill="#5a8cb8"/>
<circle cx="734.5" cy="343" r="5" fill="#8fd0c4" opacity="0.85"/>
<path d="M737 356.5Q748 353 760 356.5Q748 360 737 356.5Z" fill="#4a88c0"/>
<path d="M697.5 288L708.8 286V306.8L697.5 308Z" fill="#6f9f72"/>
<path d="M772 286L787 288V304.5L772 303.5Z" fill="#b06a6a"/>
<path d="M689.0 433.0 L694.0 438.0 L689.0 443.0" stroke="#a8a8a8" stroke-width="2.4" fill="none" stroke-linejoin="round" stroke-linecap="round" /><path d="M840.3 218.3L753.8 299.7" stroke="#e31b1b" stroke-width="3.6" stroke-linecap="round" fill="none"/>
<path d="M752.4 288.5Q750 299 747.5 309Q760 307.5 772 304.5" stroke="#e31b1b" stroke-width="3.6" stroke-linecap="round" stroke-linejoin="round" fill="none"/>
<path d="M852.5 208.5L855.5 230.5M854.5 212Q862 205 864.5 210L866.5 226M865.5 213Q871 206 874 210L875.5 231" stroke="#e31b1b" stroke-width="3.6" stroke-linecap="round" stroke-linejoin="round" fill="none"/>
<path d="M883 214L884 233M884 214.5Q893 215 892.5 225Q891.5 233 884.5 233" stroke="#e31b1b" stroke-width="3.6" stroke-linecap="round" fill="none"/>
<path d="M900 216L911.5 233.5L913.5 214" stroke="#e31b1b" stroke-width="3.6" stroke-linecap="round" stroke-linejoin="round" fill="none"/>
<path d="M920.5 227.5Q928 226 929 221Q926 216 921 222Q918 233 925 235Q931 235.5 934 230" stroke="#e31b1b" stroke-width="3.6" stroke-linecap="round" stroke-linejoin="round" fill="none"/></svg>
<svg class="a" style="left:47px;top:56px;" width="12" height="4" viewBox="0 0 12 4"><path d="M0 0H11L7 4H0z" fill="#2e2e2e"/></svg>
<div class="a" style="left:56px;top:64px;width:25px;height:26px;background:#24272a;border-radius:5px"></div>
<svg class="a" style="left:76px;top:85px;" width="5" height="5" viewBox="0 0 5 5"><path d="M5 0V5H0z" fill="#e0e0e0"/></svg>
<svg class="a" style="left:59px;top:69px;" width="18" height="17" viewBox="0 0 18 17"><g stroke="#1a1d20" stroke-width="0.9"><rect x="0.7" y="1.8" width="16.3" height="3" fill="#9a9a9a"/><rect x="0.7" y="6" width="16.3" height="3" fill="#9a9a9a"/><rect x="0.7" y="11.5" width="16.3" height="3" fill="#9a9a9a"/><circle cx="12" cy="3.3" r="3.2" fill="#9a9a9a"/><circle cx="5.3" cy="7.5" r="3.2" fill="#9a9a9a"/><circle cx="12" cy="13" r="3.2" fill="#9a9a9a"/></g></svg>
<div class="a" style="left:95px;top:64px;width:127px;height:26px;background:#24272a;border-radius:5px"></div>
<svg class="a" style="left:217px;top:85px;" width="5" height="5" viewBox="0 0 5 5"><path d="M5 0V5H0z" fill="#e0e0e0"/></svg>
<svg class="a" style="left:100px;top:68px;" width="15" height="20" viewBox="0 0 15 20"><path d="M7.5 1.2a5.6 5.6 0 0 1 3.6 9.9c-0.9 0.9-1.2 1.8-1.2 3H5.1c0-1.2-0.3-2.1-1.2-3A5.6 5.6 0 0 1 7.5 1.2z" fill="none" stroke="#9a9a9a" stroke-width="1.5"/><path d="M4.8 13.5h5.4v3.5l-1.5 2h-2.4l-1.5-2z" fill="#9a9a9a"/><path d="M8 4a3 3 0 0 1 2 2" stroke="#9a9a9a" stroke-width="1" fill="none"/></svg>
<div class="t" style="left:127.3px;top:72.32px;font-size:11.8px;color:#d0d0d0;font-weight:400;">RTX - Real-Time</div>
<div class="a" style="left:236px;top:64px;width:26px;height:26px;background:#24272a;border-radius:5px"></div>
<svg class="a" style="left:257px;top:85px;" width="5" height="5" viewBox="0 0 5 5"><path d="M5 0V5H0z" fill="#e0e0e0"/></svg>
<svg class="a" style="left:240px;top:71px;" width="19" height="13" viewBox="0 0 19 13"><path d="M0.5 7C4 1.5 13.5 0 18.5 6C13.5 11.5 4.5 12 0.5 7z" fill="none" stroke="#9a9a9a" stroke-width="1.4"/><circle cx="9.5" cy="5.8" r="4" fill="#9a9a9a"/></svg>
<div class="a" style="left:276px;top:64px;width:104px;height:26px;background:#24272a;border-radius:5px"></div>
<svg class="a" style="left:375px;top:85px;" width="5" height="5" viewBox="0 0 5 5"><path d="M5 0V5H0z" fill="#e0e0e0"/></svg>
<svg class="a" style="left:278px;top:67px;" width="22" height="20" viewBox="0 0 22 20"><circle cx="4.5" cy="6" r="3.3" fill="#9a9a9a"/><circle cx="11.5" cy="4.3" r="4" fill="#9a9a9a"/><rect x="1" y="9.5" width="14" height="9" rx="1.5" fill="#9a9a9a"/><path d="M15 13L21 9.5V18.5L15 15z" fill="#9a9a9a"/></svg>
<div class="t" style="left:308.5px;top:71.60px;font-size:12.6px;color:#d0d0d0;font-weight:400;">Perspective</div>
<svg class="a" style="left:384px;top:64px;" width="17" height="26" viewBox="0 0 17 26"><path d="M0 0h3l9 13l-9 13H0l9-13z" fill="#2a2d30"/><path d="M5 0h3l9 13l-9 13H5l9-13z" fill="#2a2d30"/></svg>
<div class="a" style="left:414px;top:64px;width:26px;height:26px;background:#24272a;border-radius:5px"></div>
<svg class="a" style="left:435px;top:85px;" width="5" height="5" viewBox="0 0 5 5"><path d="M5 0V5H0z" fill="#e0e0e0"/></svg>
<svg class="a" style="left:415px;top:70px;" width="25" height="15" viewBox="0 0 25 15"><circle cx="12.5" cy="7.5" r="3.6" fill="#9a9a9a"/><path d="M7.5 2.5a7 7 0 0 0 0 10M17.5 2.5a7 7 0 0 1 0 10" stroke="#9a9a9a" stroke-width="1.6" fill="none"/><path d="M3.5 0.5a10.5 10.5 0 0 0 0 14M21.5 0.5a10.5 10.5 0 0 1 0 14" stroke="#9a9a9a" stroke-width="1.6" fill="none"/></svg>
<div class="a" style="left:1218px;top:64px;width:91px;height:26px;background:#24272a;border-radius:5px"></div>
<svg class="a" style="left:1304px;top:85px;" width="5" height="5" viewBox="0 0 5 5"><path d="M5 0V5H0z" fill="#e0e0e0"/></svg>
<svg class="a" style="left:1227px;top:67px;" width="19" height="20" viewBox="0 0 19 20"><path d="M9.5 0.5L14.5 4.8L18 6V14L14.5 15.2L9.5 19.5L4.5 15.2L1 14V6L4.5 4.8z" fill="#c8c474" stroke="#111" stroke-width="0.6"/><circle cx="9.5" cy="10" r="6" fill="#c8c474" stroke="#1c1c1c" stroke-width="1.3"/></svg>
<div class="t" style="left:1260.5px;top:71.23px;font-size:13px;color:#d0d0d0;font-weight:400;">Default</div>
<div class="a" style="left:958px;top:99px;width:350px;height:87px;background:#1f2124;border-radius:6px"></div>
<div class="t" style="right:663px;top:108.05px;font-size:12.1px;color:#d2d2d2">FPS: 59.79, Frame time: 16.73 ms</div>
<div class="t" style="right:663px;top:128.05px;font-size:12.1px;color:#d2d2d2">NVIDIA GeForce RTX 3090: 2.8 GiB used, 20.4 GiB available</div>
<div class="t" style="right:663px;top:147.55px;font-size:12.1px;color:#d2d2d2">Process Memory: 4.6 GiB used, 27.6 GiB available</div>
<div class="t" style="right:663px;top:167.05px;font-size:12.1px;color:#d2d2d2">1280x720</div>
<svg class="a" style="left:60px;top:722px;" width="46" height="42" viewBox="0 0 46 42"><path d="M21 14V29" stroke="#5a8cc0" stroke-width="1.6"/><path d="M21 29L12 32" stroke="#c06060" stroke-width="1.6"/><path d="M21 29L33 31" stroke="#70a870" stroke-width="1.6"/></svg>
<div class="t" style="left:76px;top:725.50px;font-size:10.5px;color:#5a8cc0;font-weight:400;">Z</div>
<div class="t" style="left:62.5px;top:752.00px;font-size:10.5px;color:#c06060;font-weight:400;">X</div>
<div class="t" style="left:94.5px;top:752.00px;font-size:10.5px;color:#70a870;font-weight:400;">Y</div>
<div class="a" style="left:66px;top:768px;width:29px;height:22px;background:#24282b;border-radius:3px"></div>
<div class="t" style="left:74.5px;top:773.69px;font-size:12.5px;color:#e0e0e0;font-weight:400;">m</div>
<div class="a" style="left:1321px;top:56px;width:48px;height:741px;background:#474747;"></div>
<div class="a" style="left:1325px;top:101px;width:38px;height:1px;background:#595959;"></div>
<div class="a" style="left:1325px;top:223px;width:38px;height:1px;background:#595959;"></div>
<svg class="a" style="left:1321px;top:56px" width="48" height="300" viewBox="1321 56 48 300"><path d="M1329.5 72V65H1336.5M1353.5 65H1360.5V72M1329.5 88V95H1336.5M1353.5 95H1360.5V88" stroke="#b8b8b8" stroke-width="2" fill="none"/><path d="M1338 70.5 L1343.0 73.0 L1338 75.5 L1333.0 73.0 Z" fill="#78c878" stroke="#1e3a1e" stroke-width="0.8" stroke-linejoin="round"/><path d="M1333.0 73.0 L1338 75.5 L1338 80.5 L1333.0 78.0 Z" fill="#3d8a3d" stroke="#1e3a1e" stroke-width="0.8" stroke-linejoin="round"/><path d="M1343.0 73.0 L1338 75.5 L1338 80.5 L1343.0 78.0 Z" fill="#5aa85a" stroke="#1e3a1e" stroke-width="0.8" stroke-linejoin="round"/><path d="M1352 70.5 L1357.0 73.0 L1352 75.5 L1347.0 73.0 Z" fill="#78c878" stroke="#1e3a1e" stroke-width="0.8" stroke-linejoin="round"/><path d="M1347.0 73.0 L1352 75.5 L1352 80.5 L1347.0 78.0 Z" fill="#3d8a3d" stroke="#1e3a1e" stroke-width="0.8" stroke-linejoin="round"/><path d="M1357.0 73.0 L1352 75.5 L1352 80.5 L1357.0 78.0 Z" fill="#5aa85a" stroke="#1e3a1e" stroke-width="0.8" stroke-linejoin="round"/><path d="M1345 82.0 L1350.0 84.5 L1345 87 L1340.0 84.5 Z" fill="#78c878" stroke="#1e3a1e" stroke-width="0.8" stroke-linejoin="round"/><path d="M1340.0 84.5 L1345 87 L1345 92.0 L1340.0 89.5 Z" fill="#3d8a3d" stroke="#1e3a1e" stroke-width="0.8" stroke-linejoin="round"/><path d="M1350.0 84.5 L1345 87 L1345 92.0 L1350.0 89.5 Z" fill="#5aa85a" stroke="#1e3a1e" stroke-width="0.8" stroke-linejoin="round"/><path d="M1361 92V96H1357z" fill="#d8d8d8"/><g fill="none" stroke="#a8a8a8" stroke-width="1.3" stroke-linejoin="round"><path d="M1345 110L1356 115.5V128.5L1345 134L1334 128.5V115.5Z"/><path d="M1334 115.5L1345 121L1356 115.5M1345 121V134"/></g><path d="M1350.5 125.5L1360.5 135.5M1360.5 125.5L1350.5 135.5" stroke="#1a1a1a" stroke-width="5" stroke-linecap="round"/><path d="M1350.5 125.5L1360.5 135.5M1360.5 125.5L1350.5 135.5" stroke="#e06464" stroke-width="2.8" stroke-linecap="round"/><path d="M1345 149.5 L1357.0 155.5 L1345 161.5 L1333.0 155.5 Z" fill="#a87c7c" stroke="#e8a8a8" stroke-width="1.3" stroke-linejoin="round"/><path d="M1333.0 155.5 L1345 161.5 L1345 173.5 L1333.0 167.5 Z" fill="#7a5656" stroke="#e8a8a8" stroke-width="1.3" stroke-linejoin="round"/><path d="M1357.0 155.5 L1345 161.5 L1345 173.5 L1357.0 167.5 Z" fill="#946a6a" stroke="#e8a8a8" stroke-width="1.3" stroke-linejoin="round"/><path d="M1362 173V177H1358z" fill="#d0d0d0"/><g opacity="0.45"><path d="M1337 189.0 L1346.0 193.5 L1337 198 L1328.0 193.5 Z" fill="#5a9a5a"/><path d="M1328.0 193.5 L1337 198 L1337 207.0 L1328.0 202.5 Z" fill="#2e5e2e"/><path d="M1346.0 193.5 L1337 198 L1337 207.0 L1346.0 202.5 Z" fill="#4a804a"/></g><path d="M1350 191.0 L1360.0 196.0 L1350 201 L1340.0 196.0 Z" fill="#78c078" stroke="#2a4a2a" stroke-width="0.8" stroke-linejoin="round"/><path d="M1340.0 196.0 L1350 201 L1350 211.0 L1340.0 206.0 Z" fill="#3e7e3e" stroke="#2a4a2a" stroke-width="0.8" stroke-linejoin="round"/><path d="M1360.0 196.0 L1350 201 L1350 211.0 L1360.0 206.0 Z" fill="#5aa05a" stroke="#2a4a2a" stroke-width="0.8" stroke-linejoin="round"/><path d="M1362 214V218H1358z" fill="#d0d0d0"/><path d="M1342.58 235.21 L1343.24 231.98 L1347.36 231.98 L1348.02 235.21 L1351.55 237.25 L1354.68 236.20 L1356.75 239.78 L1354.27 241.96 L1354.27 246.04 L1356.75 248.22 L1354.68 251.80 L1351.55 250.75 L1348.02 252.79 L1347.36 256.02 L1343.24 256.02 L1342.58 252.79 L1339.05 250.75 L1335.92 251.80 L1333.85 248.22 L1336.33 246.04 L1336.33 241.96 L1333.85 239.78 L1335.92 236.20 L1339.05 237.25Z" fill="#8a6262" stroke="#c49494" stroke-width="1" stroke-linejoin="round"/><circle cx="1345.3" cy="244" r="4.3" fill="#474747" stroke="#c49494" stroke-width="1"/><circle cx="1345.3" cy="275.3" r="2.4" fill="none" stroke="#c8c8c8" stroke-width="1.1"/><path d="M1340.5 278.8H1350L1354.5 294.5L1336 295.5Z" fill="#3a3a3a" stroke="#c8c8c8" stroke-width="1.1" stroke-linejoin="round"/><g stroke="#1a1a1a" stroke-width="0.8"><rect x="1333" y="315.5" width="23" height="2.5" fill="#a8a8a8"/><rect x="1333" y="322.5" width="23" height="2.5" fill="#a8a8a8"/><rect x="1333" y="329.5" width="23" height="2.5" fill="#a8a8a8"/><circle cx="1348" cy="316.8" r="3.3" fill="#a8a8a8"/><circle cx="1340" cy="323.8" r="3.3" fill="#a8a8a8"/><circle cx="1348" cy="330.8" r="3.3" fill="#a8a8a8"/></g><path d="M1360 332V336H1356z" fill="#d0d0d0"/></svg>
<div class="a" style="left:1373px;top:57px;width:69px;height:22px;background:#454545;border-radius:5px 5px 0 0"></div>
<div class="a" style="left:1446px;top:57px;width:68px;height:22px;background:#363636;border-radius:5px 5px 0 0"></div>
<div class="a" style="left:1518px;top:57px;width:128px;height:22px;background:#363636;border-radius:5px 5px 0 0"></div>
<div class="t" style="left:1381px;top:63.19px;font-size:12.5px;color:#e0e0e0;font-weight:400;">Stage</div>
<div class="t" style="left:1454px;top:63.19px;font-size:12.5px;color:#9a9a9a;font-weight:400;">Layer</div>
<div class="t" style="left:1526px;top:62.23px;font-size:13px;color:#9a9a9a;font-weight:400;">Render Settings</div>
<div class="a" style="left:1373px;top:79px;width:588px;height:506px;background:#474747;"></div>
<div class="a" style="left:1377px;top:88px;width:532px;height:26px;background:#1f2023;"></div>
<svg class="a" style="left:1388px;top:95px;" width="13" height="13" viewBox="0 0 13 13"><circle cx="5.5" cy="5.5" r="4.3" stroke="#5a5a5a" stroke-width="1.6" fill="none"/><path d="M8.5 8.5L11.5 11.5" stroke="#5a5a5a" stroke-width="1.8"/></svg>
<div class="t" style="left:1407px;top:95.87px;font-size:12.3px;color:#606060;font-weight:400;">Search</div>
<svg class="a" style="left:1916px;top:91px;" width="18" height="17" viewBox="0 0 18 17"><path d="M1 1.5H14.5L9.5 7.5V14H6V7.5Z" fill="#a8a8a8"/><path d="M16.5 12.5V16.5H12.5Z" fill="#d8d8d8"/></svg>
<div class="a" style="left:1941px;top:93px;width:12px;height:2.2px;background:#c8c8c8;"></div>
<div class="a" style="left:1941px;top:97px;width:12px;height:2.2px;background:#c8c8c8;"></div>
<div class="a" style="left:1941px;top:101px;width:12px;height:2.2px;background:#c8c8c8;"></div>
<div class="a" style="left:1377px;top:121px;width:580px;height:460px;background:#1f2123;"></div>
<div class="a" style="left:1377px;top:121px;width:568px;height:14px;background:#333434;"></div>
<div class="t" style="left:1387px;top:123.89px;font-size:10.4px;color:#e0e0e0;font-weight:700;letter-spacing:0.15px">Name (Old to New)</div>
<div class="t" style="left:1855px;top:124.25px;font-size:10px;color:#e0e0e0;font-weight:700;">Type</div>
<div class="a" style="left:1821px;top:135px;width:1px;height:433px;background:#3a3d3f;"></div>
<div class="a" style="left:1845px;top:135px;width:1px;height:433px;background:#3a3d3f;"></div>
<svg class="a" style="left:1826px;top:123px;" width="15" height="11" viewBox="0 0 15 11"><path d="M0.7 5.5C4 0.5 11 0.5 14.3 5.5C11 10.5 4 10.5 0.7 5.5z" fill="none" stroke="#8a8a8a" stroke-width="1.3"/><circle cx="7.5" cy="5" r="3.2" fill="#8a8a8a"/><circle cx="6.3" cy="3.8" r="0.9" fill="#1f2123"/></svg>
<svg class="a" style="left:1382px;top:140px;" width="10" height="10" viewBox="0 0 10 10"><rect x="0" y="0" width="10" height="10" rx="2" fill="#6c7574"/><rect x="2" y="4" width="6" height="2" fill="#202224"/></svg>
<svg class="a" style="left:1399px;top:138px;" width="16" height="14" viewBox="0 0 16 14"><path d="M8 1.5V8.5" stroke="#6fae6f" stroke-width="2" stroke-linecap="round"/><path d="M8 8.5L2 12" stroke="#2aa7d2" stroke-width="2.2" stroke-linecap="round"/><path d="M8 8.5L14 12" stroke="#c06262" stroke-width="2.2" stroke-linecap="round"/></svg>
<div class="t" style="left:1421px;top:139.79px;font-size:12.5px;color:#8e9a99;font-weight:400;letter-spacing:0.25px">RootNode (defaultPrim)</div>
<svg class="a" style="left:1826px;top:140px;" width="15" height="11" viewBox="0 0 15 11"><path d="M0.7 5.5C4 0.5 11 0.5 14.3 5.5C11 10.5 4 10.5 0.7 5.5z" fill="none" stroke="#7f8b8c" stroke-width="1.3"/><circle cx="7.5" cy="5" r="3.2" fill="#7f8b8c"/><circle cx="6.3" cy="3.8" r="0.9" fill="#1f2123"/></svg>
<div class="t" style="left:1853px;top:139.79px;font-size:12.5px;color:#8e9a99;font-weight:400;letter-spacing:0.35px">Xform</div>
<svg class="a" style="left:1402px;top:160px;" width="10" height="10" viewBox="0 0 10 10"><rect x="0" y="0" width="10" height="10" rx="2" fill="#6c7574"/><rect x="2" y="4" width="6" height="2" fill="#202224"/><rect x="4" y="2" width="2" height="6" fill="#202224"/></svg>
<svg class="a" style="left:1419px;top:158px;" width="17" height="15" viewBox="0 0 17 15"><path d="M0 2.5a2 2 0 0 1 2-2h4.5l2 2H15a2 2 0 0 1 2 2V12.5a2 2 0 0 1-2 2H2a2 2 0 0 1-2-2z" fill="#4b5756"/></svg>
<div class="t" style="left:1441px;top:159.79px;font-size:12.5px;color:#8e9a99;font-weight:400;letter-spacing:0.25px">Materials</div>
<svg class="a" style="left:1826px;top:160px;" width="15" height="11" viewBox="0 0 15 11"><path d="M0.7 5.5C4 0.5 11 0.5 14.3 5.5C11 10.5 4 10.5 0.7 5.5z" fill="none" stroke="#7f8b8c" stroke-width="1.3"/><circle cx="7.5" cy="5" r="3.2" fill="#7f8b8c"/><circle cx="6.3" cy="3.8" r="0.9" fill="#1f2123"/></svg>
<div class="t" style="left:1853px;top:159.79px;font-size:12.5px;color:#8e9a99;font-weight:400;letter-spacing:0.35px">Scope</div>
<svg class="a" style="left:1419px;top:178px;" width="17" height="15" viewBox="0 0 17 15"><path d="M0 2.5a2 2 0 0 1 2-2h4.5l2 2H15a2 2 0 0 1 2 2V12.5a2 2 0 0 1-2 2H2a2 2 0 0 1-2-2z" fill="#4b5756"/></svg>
<div class="t" style="left:1441px;top:179.79px;font-size:12.5px;color:#8e9a99;font-weight:400;letter-spacing:0.25px">Geometry</div>
<svg class="a" style="left:1826px;top:180px;" width="15" height="11" viewBox="0 0 15 11"><path d="M0.7 5.5C4 0.5 11 0.5 14.3 5.5C11 10.5 4 10.5 0.7 5.5z" fill="none" stroke="#7f8b8c" stroke-width="1.3"/><circle cx="7.5" cy="5" r="3.2" fill="#7f8b8c"/><circle cx="6.3" cy="3.8" r="0.9" fill="#1f2123"/></svg>
<div class="t" style="left:1853px;top:179.79px;font-size:12.5px;color:#8e9a99;font-weight:400;letter-spacing:0.35px">Scope</div>
<svg class="a" style="left:1402px;top:200px;" width="10" height="10" viewBox="0 0 10 10"><rect x="0" y="0" width="10" height="10" rx="2" fill="#6c7574"/><rect x="2" y="4" width="6" height="2" fill="#202224"/></svg>
<svg class="a" style="left:1419px;top:198px;" width="17" height="15" viewBox="0 0 17 15"><path d="M0 2.5a2 2 0 0 1 2-2h4.5l2 2H15a2 2 0 0 1 2 2V12.5a2 2 0 0 1-2 2H2a2 2 0 0 1-2-2z" fill="#4b5756"/></svg>
<div class="t" style="left:1441px;top:199.79px;font-size:12.5px;color:#8e9a99;font-weight:400;letter-spacing:0.25px">ReferencePrims</div>
<svg class="a" style="left:1826px;top:200px;" width="15" height="11" viewBox="0 0 15 11"><path d="M0.7 5.5C4 0.5 11 0.5 14.3 5.5C11 10.5 4 10.5 0.7 5.5z" fill="none" stroke="#7f8b8c" stroke-width="1.3"/><circle cx="7.5" cy="5" r="3.2" fill="#7f8b8c"/><circle cx="6.3" cy="3.8" r="0.9" fill="#1f2123"/></svg>
<div class="t" style="left:1853px;top:199.79px;font-size:12.5px;color:#8e9a99;font-weight:400;letter-spacing:0.35px">Scope</div>
<svg class="a" style="left:1422px;top:220px;" width="10" height="10" viewBox="0 0 10 10"><rect x="0" y="0" width="10" height="10" rx="2" fill="#6c7574"/><rect x="2" y="4" width="6" height="2" fill="#202224"/></svg>
<svg class="a" style="left:1439px;top:218px;" width="16" height="14" viewBox="0 0 16 14"><path d="M8 1.5V8.5" stroke="#6fae6f" stroke-width="2" stroke-linecap="round"/><path d="M8 8.5L2 12" stroke="#2aa7d2" stroke-width="2.2" stroke-linecap="round"/><path d="M8 8.5L14 12" stroke="#c06262" stroke-width="2.2" stroke-linecap="round"/></svg>
<div class="t" style="left:1461px;top:219.79px;font-size:12.5px;color:#8e9a99;font-weight:400;letter-spacing:0.25px">box_joint_01</div>
<svg class="a" style="left:1826px;top:220px;" width="15" height="11" viewBox="0 0 15 11"><path d="M0.7 5.5C4 0.5 11 0.5 14.3 5.5C11 10.5 4 10.5 0.7 5.5z" fill="none" stroke="#7f8b8c" stroke-width="1.3"/><circle cx="7.5" cy="5" r="3.2" fill="#7f8b8c"/><circle cx="6.3" cy="3.8" r="0.9" fill="#1f2123"/></svg>
<div class="t" style="left:1853px;top:219.79px;font-size:12.5px;color:#8e9a99;font-weight:400;letter-spacing:0.35px">Xform</div>
<svg class="a" style="left:1442px;top:240px;" width="10" height="10" viewBox="0 0 10 10"><rect x="0" y="0" width="10" height="10" rx="2" fill="#6c7574"/><rect x="2" y="4" width="6" height="2" fill="#202224"/></svg>
<svg class="a" style="left:1459px;top:238px;" width="16" height="14" viewBox="0 0 16 14"><path d="M8 1.5V8.5" stroke="#6fae6f" stroke-width="2" stroke-linecap="round"/><path d="M8 8.5L2 12" stroke="#2aa7d2" stroke-width="2.2" stroke-linecap="round"/><path d="M8 8.5L14 12" stroke="#c06262" stroke-width="2.2" stroke-linecap="round"/></svg>
<div class="t" style="left:1481px;top:239.79px;font-size:12.5px;color:#8e9a99;font-weight:400;letter-spacing:0.25px">box_obj_01</div>
<svg class="a" style="left:1826px;top:240px;" width="15" height="11" viewBox="0 0 15 11"><path d="M0.7 5.5C4 0.5 11 0.5 14.3 5.5C11 10.5 4 10.5 0.7 5.5z" fill="none" stroke="#7f8b8c" stroke-width="1.3"/><circle cx="7.5" cy="5" r="3.2" fill="#7f8b8c"/><circle cx="6.3" cy="3.8" r="0.9" fill="#1f2123"/></svg>
<div class="t" style="left:1853px;top:239.79px;font-size:12.5px;color:#8e9a99;font-weight:400;letter-spacing:0.35px">Xform</div>
<svg class="a" style="left:1479px;top:257px;" width="16" height="17" viewBox="0 0 16 17"><path d="M8 0.5L15.5 4V12.8L8 16.5L0.5 12.8V4z" fill="#4c5455"/><path d="M8 0.5L15.5 4L8 7.6L0.5 4z" fill="#5f6669"/><path d="M0.5 4L8 7.6V16.5L0.5 12.8z" fill="#2f3b41"/></svg>
<div class="t" style="left:1501px;top:259.79px;font-size:12.5px;color:#8e9a99;font-weight:400;letter-spacing:0.25px">box_mesh_01</div>
<svg class="a" style="left:1826px;top:260px;" width="15" height="11" viewBox="0 0 15 11"><path d="M0.7 5.5C4 0.5 11 0.5 14.3 5.5C11 10.5 4 10.5 0.7 5.5z" fill="none" stroke="#7f8b8c" stroke-width="1.3"/><circle cx="7.5" cy="5" r="3.2" fill="#7f8b8c"/><circle cx="6.3" cy="3.8" r="0.9" fill="#1f2123"/></svg>
<div class="t" style="left:1853px;top:259.79px;font-size:12.5px;color:#8e9a99;font-weight:400;letter-spacing:0.35px">Mesh</div>
<div class="a" style="left:1377px;top:275px;width:568px;height:20px;background:#454d4f;"></div>
<div class="a" style="left:1821px;top:275px;width:1px;height:20px;background:#30353a;"></div>
<div class="a" style="left:1845px;top:275px;width:1px;height:20px;background:#30353a;"></div>
<svg class="a" style="left:1462px;top:280px;" width="10" height="10" viewBox="0 0 10 10"><rect x="0" y="0" width="10" height="10" rx="2" fill="#d6e0e0"/><rect x="2" y="4" width="6" height="2" fill="#202224"/></svg>
<svg class="a" style="left:1479px;top:278px;" width="16" height="14" viewBox="0 0 16 14"><path d="M8 1.5V8.5" stroke="#6fae6f" stroke-width="2" stroke-linecap="round"/><path d="M8 8.5L2 12" stroke="#2aa7d2" stroke-width="2.2" stroke-linecap="round"/><path d="M8 8.5L14 12" stroke="#c06262" stroke-width="2.2" stroke-linecap="round"/></svg>
<div class="t" style="left:1501px;top:279.79px;font-size:12.5px;color:#eef2f2;font-weight:400;letter-spacing:0.25px">lid_joint_01</div>
<svg class="a" style="left:1826px;top:280px;" width="15" height="11" viewBox="0 0 15 11"><path d="M0.7 5.5C4 0.5 11 0.5 14.3 5.5C11 10.5 4 10.5 0.7 5.5z" fill="none" stroke="#e6e6e6" stroke-width="1.3"/><circle cx="7.5" cy="5" r="3.2" fill="#e6e6e6"/><circle cx="6.3" cy="3.8" r="0.9" fill="#1f2123"/></svg>
<div class="t" style="left:1853px;top:279.79px;font-size:12.5px;color:#eef2f2;font-weight:400;letter-spacing:0.35px">Xform</div>
<svg class="a" style="left:1482px;top:300px;" width="10" height="10" viewBox="0 0 10 10"><rect x="0" y="0" width="10" height="10" rx="2" fill="#6c7574"/><rect x="2" y="4" width="6" height="2" fill="#202224"/></svg>
<svg class="a" style="left:1499px;top:298px;" width="16" height="14" viewBox="0 0 16 14"><path d="M8 1.5V8.5" stroke="#6fae6f" stroke-width="2" stroke-linecap="round"/><path d="M8 8.5L2 12" stroke="#2aa7d2" stroke-width="2.2" stroke-linecap="round"/><path d="M8 8.5L14 12" stroke="#c06262" stroke-width="2.2" stroke-linecap="round"/></svg>
<div class="t" style="left:1521px;top:299.79px;font-size:12.5px;color:#8e9a99;font-weight:400;letter-spacing:0.25px">lid_obj_01</div>
<svg class="a" style="left:1826px;top:300px;" width="15" height="11" viewBox="0 0 15 11"><path d="M0.7 5.5C4 0.5 11 0.5 14.3 5.5C11 10.5 4 10.5 0.7 5.5z" fill="none" stroke="#7f8b8c" stroke-width="1.3"/><circle cx="7.5" cy="5" r="3.2" fill="#7f8b8c"/><circle cx="6.3" cy="3.8" r="0.9" fill="#1f2123"/></svg>
<div class="t" style="left:1853px;top:299.79px;font-size:12.5px;color:#8e9a99;font-weight:400;letter-spacing:0.35px">Xform</div>
<svg class="a" style="left:1519px;top:317px;" width="16" height="17" viewBox="0 0 16 17"><path d="M8 0.5L15.5 4V12.8L8 16.5L0.5 12.8V4z" fill="#4c5455"/><path d="M8 0.5L15.5 4L8 7.6L0.5 4z" fill="#5f6669"/><path d="M0.5 4L8 7.6V16.5L0.5 12.8z" fill="#2f3b41"/></svg>
<div class="t" style="left:1541px;top:319.79px;font-size:12.5px;color:#8e9a99;font-weight:400;letter-spacing:0.25px">lid_mesh_01</div>
<svg class="a" style="left:1826px;top:320px;" width="15" height="11" viewBox="0 0 15 11"><path d="M0.7 5.5C4 0.5 11 0.5 14.3 5.5C11 10.5 4 10.5 0.7 5.5z" fill="none" stroke="#7f8b8c" stroke-width="1.3"/><circle cx="7.5" cy="5" r="3.2" fill="#7f8b8c"/><circle cx="6.3" cy="3.8" r="0.9" fill="#1f2123"/></svg>
<div class="t" style="left:1853px;top:319.79px;font-size:12.5px;color:#8e9a99;font-weight:400;letter-spacing:0.35px">Mesh</div>
<svg class="a" style="left:1502px;top:340px;" width="10" height="10" viewBox="0 0 10 10"><rect x="0" y="0" width="10" height="10" rx="2" fill="#6c7574"/><rect x="2" y="4" width="6" height="2" fill="#202224"/><rect x="4" y="2" width="2" height="6" fill="#202224"/></svg>
<svg class="a" style="left:1519px;top:338px;" width="16" height="14" viewBox="0 0 16 14"><path d="M8 1.5V8.5" stroke="#6fae6f" stroke-width="2" stroke-linecap="round"/><path d="M8 8.5L2 12" stroke="#2aa7d2" stroke-width="2.2" stroke-linecap="round"/><path d="M8 8.5L14 12" stroke="#c06262" stroke-width="2.2" stroke-linecap="round"/></svg>
<div class="t" style="left:1541px;top:339.79px;font-size:12.5px;color:#8e9a99;font-weight:400;letter-spacing:0.25px">handle_joint_01</div>
<svg class="a" style="left:1826px;top:340px;" width="15" height="11" viewBox="0 0 15 11"><path d="M0.7 5.5C4 0.5 11 0.5 14.3 5.5C11 10.5 4 10.5 0.7 5.5z" fill="none" stroke="#7f8b8c" stroke-width="1.3"/><circle cx="7.5" cy="5" r="3.2" fill="#7f8b8c"/><circle cx="6.3" cy="3.8" r="0.9" fill="#1f2123"/></svg>
<div class="t" style="left:1853px;top:339.79px;font-size:12.5px;color:#8e9a99;font-weight:400;letter-spacing:0.35px">Xform</div>
<svg class="a" style="left:1502px;top:360px;" width="10" height="10" viewBox="0 0 10 10"><rect x="0" y="0" width="10" height="10" rx="2" fill="#6c7574"/><rect x="2" y="4" width="6" height="2" fill="#202224"/><rect x="4" y="2" width="2" height="6" fill="#202224"/></svg>
<svg class="a" style="left:1519px;top:358px;" width="16" height="14" viewBox="0 0 16 14"><path d="M8 1.5V8.5" stroke="#6fae6f" stroke-width="2" stroke-linecap="round"/><path d="M8 8.5L2 12" stroke="#2aa7d2" stroke-width="2.2" stroke-linecap="round"/><path d="M8 8.5L14 12" stroke="#c06262" stroke-width="2.2" stroke-linecap="round"/></svg>
<div class="t" style="left:1541px;top:359.79px;font-size:12.5px;color:#8e9a99;font-weight:400;letter-spacing:0.25px">lock_00_joint_01</div>
<svg class="a" style="left:1826px;top:360px;" width="15" height="11" viewBox="0 0 15 11"><path d="M0.7 5.5C4 0.5 11 0.5 14.3 5.5C11 10.5 4 10.5 0.7 5.5z" fill="none" stroke="#7f8b8c" stroke-width="1.3"/><circle cx="7.5" cy="5" r="3.2" fill="#7f8b8c"/><circle cx="6.3" cy="3.8" r="0.9" fill="#1f2123"/></svg>
<div class="t" style="left:1853px;top:359.79px;font-size:12.5px;color:#8e9a99;font-weight:400;letter-spacing:0.35px">Xform</div>
<svg class="a" style="left:1502px;top:380px;" width="10" height="10" viewBox="0 0 10 10"><rect x="0" y="0" width="10" height="10" rx="2" fill="#6c7574"/><rect x="2" y="4" width="6" height="2" fill="#202224"/><rect x="4" y="2" width="2" height="6" fill="#202224"/></svg>
<svg class="a" style="left:1519px;top:378px;" width="16" height="14" viewBox="0 0 16 14"><path d="M8 1.5V8.5" stroke="#6fae6f" stroke-width="2" stroke-linecap="round"/><path d="M8 8.5L2 12" stroke="#2aa7d2" stroke-width="2.2" stroke-linecap="round"/><path d="M8 8.5L14 12" stroke="#c06262" stroke-width="2.2" stroke-linecap="round"/></svg>
<div class="t" style="left:1541px;top:379.79px;font-size:12.5px;color:#8e9a99;font-weight:400;letter-spacing:0.25px">lock_01_joint_01</div>
<svg class="a" style="left:1826px;top:380px;" width="15" height="11" viewBox="0 0 15 11"><path d="M0.7 5.5C4 0.5 11 0.5 14.3 5.5C11 10.5 4 10.5 0.7 5.5z" fill="none" stroke="#7f8b8c" stroke-width="1.3"/><circle cx="7.5" cy="5" r="3.2" fill="#7f8b8c"/><circle cx="6.3" cy="3.8" r="0.9" fill="#1f2123"/></svg>
<div class="t" style="left:1853px;top:379.79px;font-size:12.5px;color:#8e9a99;font-weight:400;letter-spacing:0.35px">Xform</div>
<svg class="a" style="left:1419px;top:398px;" width="17" height="15" viewBox="0 0 17 15"><path d="M0 2.5a2 2 0 0 1 2-2h4.5l2 2H15a2 2 0 0 1 2 2V12.5a2 2 0 0 1-2 2H2a2 2 0 0 1-2-2z" fill="#4b5756"/></svg>
<div class="t" style="left:1441px;top:399.79px;font-size:12.5px;color:#8e9a99;font-weight:400;letter-spacing:0.25px">Grasp</div>
<svg class="a" style="left:1826px;top:400px;" width="15" height="11" viewBox="0 0 15 11"><path d="M0.7 5.5C4 0.5 11 0.5 14.3 5.5C11 10.5 4 10.5 0.7 5.5z" fill="none" stroke="#7f8b8c" stroke-width="1.3"/><circle cx="7.5" cy="5" r="3.2" fill="#7f8b8c"/><circle cx="6.3" cy="3.8" r="0.9" fill="#1f2123"/></svg>
<div class="t" style="left:1853px;top:399.79px;font-size:12.5px;color:#8e9a99;font-weight:400;letter-spacing:0.35px">Scope</div>
<svg class="a" style="left:1495px;top:289px;" width="81" height="8" viewBox="0 0 81 8"><path d="M5.0 4H76.0" stroke="#e21b1b" stroke-width="4" stroke-linecap="round" fill="none"/></svg>
<svg class="a" style="left:1519px;top:352.7px;" width="104" height="8" viewBox="0 0 104 8"><path d="M4.9 4H99.1" stroke="#e21b1b" stroke-width="3.8" stroke-linecap="round" fill="none"/></svg>
<svg class="a" style="left:1523px;top:372px;" width="96" height="8" viewBox="0 0 96 8"><path d="M4.9 4H91.1" stroke="#e21b1b" stroke-width="3.8" stroke-linecap="round" fill="none"/></svg>
<svg class="a" style="left:1534px;top:395px;" width="90" height="8" viewBox="0 0 90 8"><path d="M4.9 4H85.1" stroke="#e21b1b" stroke-width="3.8" stroke-linecap="round" fill="none"/></svg>
<div class="a" style="left:1373px;top:590px;width:85px;height:22px;background:#474747;border-radius:5px 5px 0 0"></div>
<div class="t" style="left:1381px;top:595.24px;font-size:13px;color:#e0e0e0;font-weight:400;">Property</div>
<div class="a" style="left:1373px;top:612px;width:588px;height:213px;background:#474747;"></div>
<div class="a" style="left:1385px;top:617px;width:555px;height:24px;background:#1f2023;border-radius:3px"></div>
<svg class="a" style="left:1396px;top:623px;" width="13" height="13" viewBox="0 0 13 13"><circle cx="5.5" cy="5.5" r="4.3" stroke="#5a5a5a" stroke-width="1.6" fill="none"/><path d="M8.5 8.5L11.5 11.5" stroke="#5a5a5a" stroke-width="1.8"/></svg>
<div class="t" style="left:1415px;top:623.87px;font-size:12.3px;color:#606060;font-weight:400;">Search</div>
<div class="a" style="left:1385px;top:646px;width:52px;height:22px;background:#24272a;border-radius:3px"></div>
<svg class="a" style="left:1390px;top:649px;" width="16" height="16" viewBox="0 0 16 16"><rect x="6" y="0" width="4.5" height="16" fill="#5c9e5c"/><rect x="0" y="5.8" width="16" height="4.5" fill="#5c9e5c"/></svg>
<div class="t" style="left:1410px;top:651.42px;font-size:12.8px;color:#e6e6e6;font-weight:400;">Add</div>
<div class="a" style="left:1473px;top:646px;width:467px;height:24px;background:#1f2023;border-radius:3px"></div>
<div class="t" style="left:1481px;top:652.69px;font-size:12.5px;color:#dcdcdc;font-weight:400;">lid_joint_01</div>
<div class="t" style="left:1385px;top:678.69px;font-size:12.5px;color:#9a9a9a;font-weight:400;">Prim Path</div>
<div class="a" style="left:1473px;top:675px;width:467px;height:23px;background:#1f2023;border-radius:3px"></div>
<div class="t" style="left:1481px;top:681.51px;font-size:12.7px;color:#dcdcdc;font-weight:400;">/RootNode/ReferencePrims/box_joint_01/box_obj_01/lid_joint_01</div>
<div class="t" style="left:1384px;top:706.24px;font-size:13px;color:#9a9a9a;font-weight:400;">Instanceable</div>
<div class="a" style="left:1476px;top:706px;width:14px;height:14px;background:#a8a8a8;border-radius:2px"></div>
<div class="a" style="left:1377px;top:733px;width:568px;height:92px;background:#343535;border-radius:4px 4px 0 0"></div>
<svg class="a" style="left:1384px;top:749px;" width="8" height="6" viewBox="0 0 8 6"><path d="M0 0H8L4 6z" fill="#d8d8d8"/></svg>
<div class="t" style="left:1398px;top:745.24px;font-size:13px;color:#dcdcdc;font-weight:400;letter-spacing:0.35px">Transform</div>
<div class="a" style="left:1914px;top:739px;width:25px;height:25px;background:#2a2c2d;border-radius:3px"></div>
<svg class="a" style="left:1917px;top:743px;" width="19" height="17" viewBox="0 0 19 17"><rect x="6" y="4" width="7" height="7" fill="none" stroke="#d0d0d0" stroke-width="1.3"/><path d="M3 3V14H16" stroke="#c05a5a" stroke-width="1.2" fill="none"/><path d="M16 12L18.5 14L16 16Z" fill="#c05a5a"/><path d="M3 2V14" stroke="#50a050" stroke-width="1.2"/><path d="M1 3L3 0.5L5 3Z" fill="#50a050"/></svg>
<div class="t" style="left:1383px;top:790.24px;font-size:13px;color:#b8b8b8;font-weight:400;">Translate</div>
<div class="a" style="left:1511px;top:784px;width:126px;height:24px;background:#1f2023;border-radius:3px"></div>
<div class="a" style="left:1511px;top:784px;width:14px;height:24px;background:#c05a5a;border-radius:3px 0 0 3px"></div>
<div class="t" style="left:1513px;top:790.24px;font-size:13px;color:#e8e8e8;font-weight:400;">X</div>
<div class="t" style="left:1525px;width:112px;text-align:center;top:790.69px;font-size:12.5px;color:#e0e0e0">-0.12863</div>
<div class="a" style="left:1658px;top:784px;width:121px;height:24px;background:#1f2023;border-radius:3px"></div>
<div class="a" style="left:1658px;top:784px;width:13px;height:24px;background:#6aa06a;border-radius:3px 0 0 3px"></div>
<div class="t" style="left:1660px;top:790.24px;font-size:13px;color:#e8e8e8;font-weight:400;">Y</div>
<div class="t" style="left:1671px;width:108px;text-align:center;top:790.69px;font-size:12.5px;color:#e0e0e0">0.0</div>
<div class="a" style="left:1800px;top:784px;width:121px;height:24px;background:#1f2023;border-radius:3px"></div>
<div class="a" style="left:1800px;top:784px;width:14px;height:24px;background:#4a82b4;border-radius:3px 0 0 3px"></div>
<div class="t" style="left:1802px;top:790.24px;font-size:13px;color:#e8e8e8;font-weight:400;">Z</div>
<div class="t" style="left:1814px;width:107px;text-align:center;top:790.69px;font-size:12.5px;color:#e0e0e0">0.1716</div>
<div class="a" style="left:1642px;top:790px;width:12px;height:12px;background:#4a82b4;border-radius:2px"></div>
<div class="a" style="left:1789px;top:793px;width:4px;height:4px;background:#555;"></div>
<div class="a" style="left:1927px;top:790px;width:12px;height:12px;background:#4a82b4;border-radius:2px"></div>
<div class="a" style="left:1511px;top:816px;width:14px;height:9px;background:#c05a5a;border-radius:3px 0 0 0"></div>
<div class="a" style="left:1525px;top:816px;width:112px;height:9px;background:#1f2023;"></div>
<div class="a" style="left:1658px;top:816px;width:13px;height:9px;background:#6aa06a;border-radius:3px 0 0 0"></div>
<div class="a" style="left:1671px;top:816px;width:108px;height:9px;background:#1f2023;"></div>
<div class="a" style="left:1800px;top:816px;width:14px;height:9px;background:#4a82b4;border-radius:3px 0 0 0"></div>
<div class="a" style="left:1814px;top:816px;width:107px;height:9px;background:#1f2023;"></div>
<div class="t" style="left:1383px;top:823.24px;font-size:13px;color:#b8b8b8;font-weight:400;">Rotate</div>
<div class="t" style="left:1525px;width:112px;text-align:center;top:822.69px;font-size:12.5px;color:#e0e0e0">0.0</div>
<div class="t" style="left:1671px;width:108px;text-align:center;top:822.69px;font-size:12.5px;color:#e0e0e0">0.0</div>
<div class="t" style="left:1814px;width:107px;text-align:center;top:822.69px;font-size:12.5px;color:#e0e0e0">0.0</div>
<div class="a" style="left:1948px;top:649px;width:6px;height:176px;background:#a6a6a6;border-radius:3px"></div>
<div class="a" style="left:0px;top:797px;width:1369px;height:28px;background:#1f2023;"></div>
<div class="a" style="left:169px;top:824px;width:1200px;height:1px;background:#3c3c3c;"></div>
<div class="a" style="left:0px;top:802px;width:81px;height:23px;background:#353535;border-radius:5px 5px 0 0"></div>
<div class="a" style="left:85px;top:802px;width:84px;height:23px;background:#474747;border-radius:5px 5px 0 0"></div>
<div class="t" style="left:7px;top:808.42px;font-size:12.8px;color:#9a9a9a;font-weight:400;">Console</div>
<div class="t" style="left:93px;top:807.78px;font-size:13.5px;color:#e0e0e0;font-weight:400;">Content</div>
</body></html>
